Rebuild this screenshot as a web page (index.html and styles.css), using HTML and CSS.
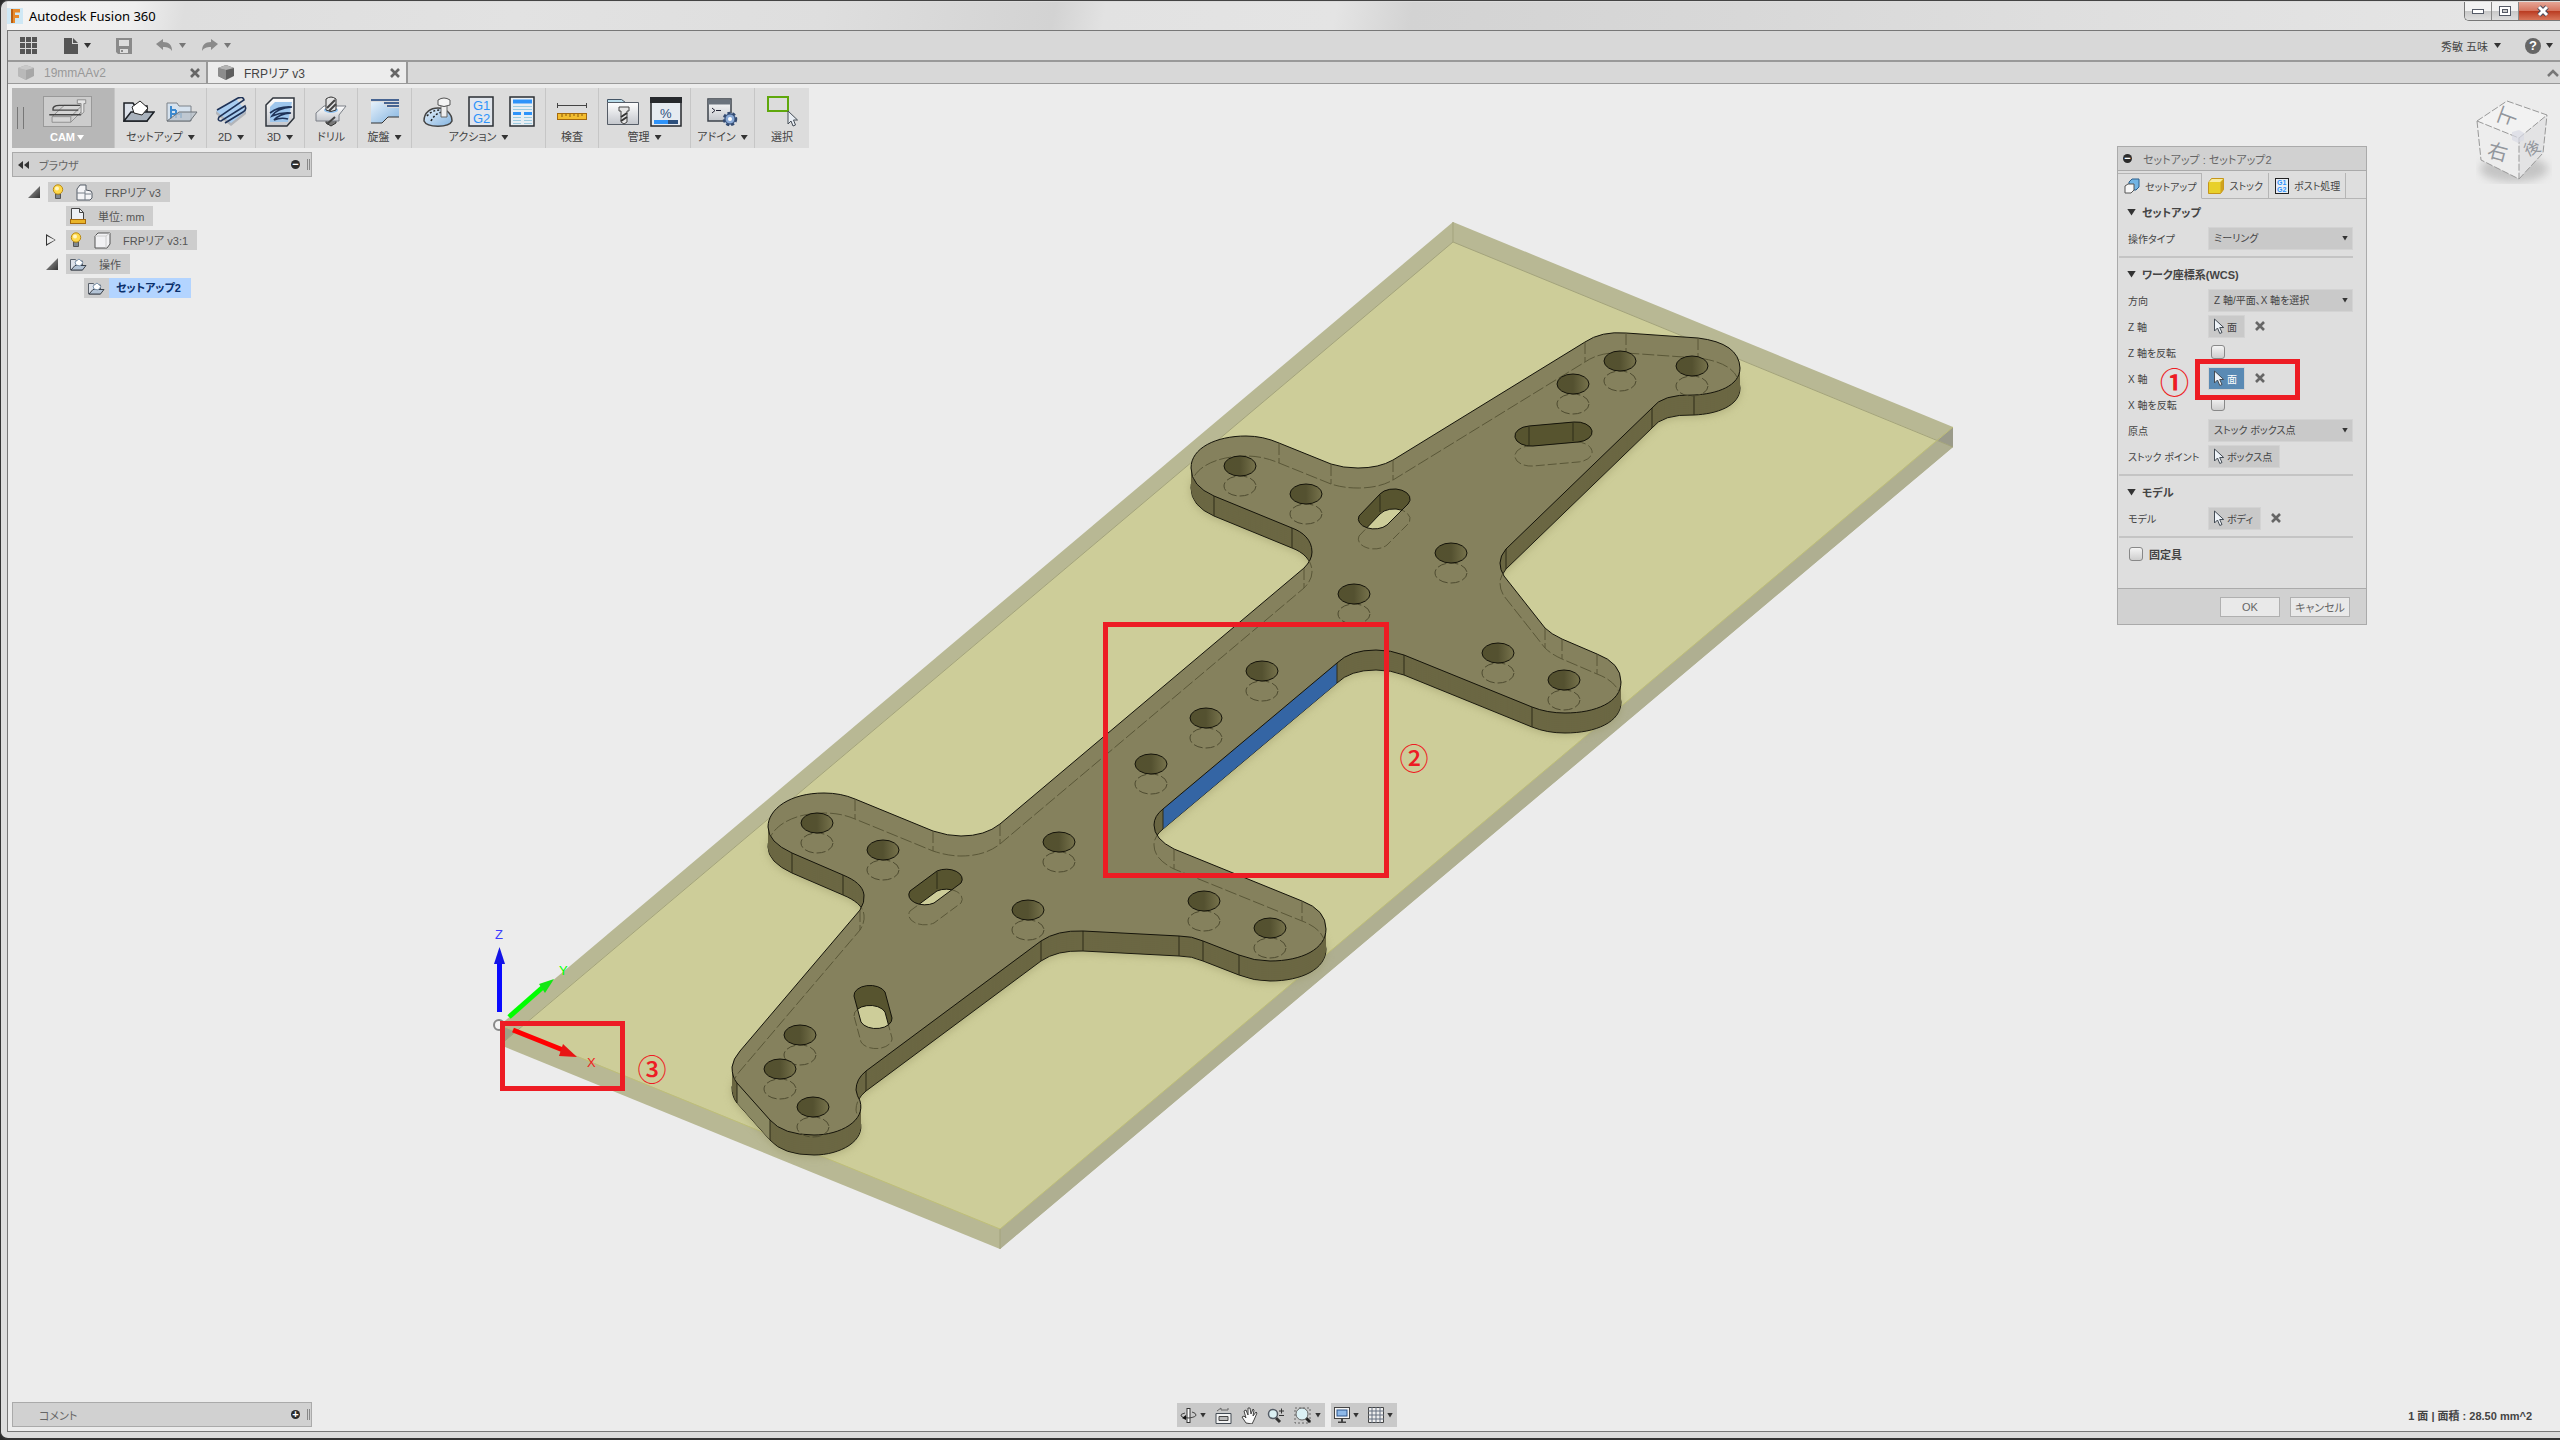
FILE: index.html
```html
<!DOCTYPE html>
<html lang="ja">
<head>
    <meta charset="utf-8">
    <title>Autodesk Fusion 360</title>
    <link rel="stylesheet" href="styles.css">
</head>
<body>
    <!-- shared icons -->
    <svg class="defs" width="0" height="0">
        <defs>
            <linearGradient id="blueFill" x1="0" y1="0" x2="1" y2="1">
                <stop offset="0" stop-color="#e6f1fb"/><stop offset="1" stop-color="#84b4e0"/>
            </linearGradient>
            <linearGradient id="greyFill" x1="0" y1="0" x2="0" y2="1">
                <stop offset="0" stop-color="#fff"/><stop offset="1" stop-color="#c3c6cc"/>
            </linearGradient>
        </defs>
        <symbol id="cursor" viewBox="0 0 12 17">
            <path d="M1.500 1v12l3-3 2.300 5.500 2.200-1-2.300-5h4z" fill="#eef3f8" stroke="#444c55"/>
        </symbol>
        <symbol id="cross" viewBox="0 0 10 10">
            <path d="M1 1l8 8M9 1l-8 8" stroke="#666" stroke-width="2.600"/>
        </symbol>
        <symbol id="bulb" viewBox="0 0 12 16">
            <path d="M3.500 10h5v4.500h-5z" fill="#7e8791" stroke="#555"/>
            <circle cx="6" cy="5.500" r="4.700" fill="#ffd94a" stroke="#b98a14"/>
            <circle cx="5" cy="4.500" r="2" fill="#fff6c4"/>
        </symbol>
        <symbol id="setup" viewBox="0 0 32 23">
            <path d="M1 3h9l2 3h12v15H1z" fill="#dde2ea" stroke="#1b1f25" stroke-width="1.500"/>
            <path d="M1 21L8 12h23l-7 9z" fill="#a9b2bd" stroke="#1b1f25" stroke-width="1.500"/>
            <path d="M9 7l8-6 8 7-6 7-8-2z" fill="#fff" stroke="#222"/>
        </symbol>
        <symbol id="setupSmall" viewBox="0 0 17 13">
            <path d="M.5 1.500h5l1 1.500h6v9H.5z" fill="#dde2ea" stroke="#59606a"/>
            <path d="M1 12l4-4.500h11L12.500 12z" fill="#b4c4d6" stroke="#3c434c"/>
            <path d="M5 4l4-3 4 3.500L10 8 6 7z" fill="#fff" stroke="#7c93ac"/>
        </symbol>
        <symbol id="docCube" viewBox="0 0 16 16">
            <path d="M0 3L8 0l8 3v8l-8 4-8-4z" fill="#5f5f5f"/>
            <path d="M0 3l8 2v10l-8-4z" fill="#8c8c8c"/>
            <path d="M0 3L8 0l8 3-8 2z" fill="#b4b4b4"/>
        </symbol>
    </svg>

    <div class="window">
        <header class="titlebar">
            <svg class="app-icon" viewBox="0 0 16 16">
                <rect width="16" height="16" fill="#cfe8f5"/>
                <path d="M4 1h9v3.500H8V7h4v3H8v5H4z" fill="#e8892b"/>
                <path d="M4 1h2v14H4z" fill="#b85f14"/>
            </svg>
            <span class="app-name">Autodesk Fusion 360</span>
            <div class="window-buttons">
                <button aria-label="最小化"><svg width="14" height="14" viewBox="0 0 14 14"><rect x="1.500" y="5.500" width="11" height="4" fill="#fff" stroke="#555a66"/></svg></button>
                <button aria-label="最大化"><svg width="14" height="14" viewBox="0 0 14 14"><rect x="1.500" y="2.500" width="11" height="9" fill="#fff" stroke="#555a66"/><rect x="4.500" y="5.500" width="5" height="3" fill="#ccc" stroke="#555a66"/></svg></button>
                <button class="close" aria-label="閉じる"><svg width="14" height="14" viewBox="0 0 14 14"><path d="M3 3l8 8M11 3l-8 8" stroke="#4d4d5c" stroke-width="5"/><path d="M3 3l8 8M11 3l-8 8" stroke="#fff" stroke-width="3"/></svg></button>
            </div>
        </header>

        <div class="client">
            <nav class="quickbar">
                <button class="q-grid" aria-label="データ パネル"><svg width="17" height="17" viewBox="0 0 17 17" fill="#555"><path d="M0 0h5v5H0zM6 0h5v5H6zM12 0h5v5h-5zM0 6h5v5H0zM6 6h5v5H6zM12 6h5v5h-5zM0 12h5v5H0zM6 12h5v5H6zM12 12h5v5h-5z"/></svg></button>
                <button class="q-file" aria-label="ファイル"><svg width="14" height="16" viewBox="0 0 14 16" fill="#555"><path d="M0 0h8v6h6v10H0z"/><path d="M9 0l5 5H9z"/></svg><i class="caret"></i></button>
                <button class="q-save" aria-label="保存"><svg width="16" height="16" viewBox="0 0 16 16"><path d="M0 0h16v16H2l-2-2z" fill="#8a8a8a"/><path d="M3 2h10v6H3zM4 11h8v4H4z" fill="#ddd"/><path d="M5 12h2v2H5z" fill="#8a8a8a"/></svg></button>
                <button class="q-undo" aria-label="元に戻す"><svg width="17" height="13" viewBox="0 0 17 13"><path d="M0 5l7-5v3c6 0 9 3 9 9-2-3-4-4-9-4v3z" fill="#8a8a8a"/></svg><i class="caret dim"></i></button>
                <button class="q-redo" aria-label="やり直し"><svg width="17" height="13" viewBox="0 0 17 13"><path d="M17 5l-7-5v3C4 3 1 6 1 12c2-3 4-4 9-4v3z" fill="#8a8a8a"/></svg><i class="caret dim"></i></button>
                <button class="q-user">秀敏 五味 <i class="caret"></i></button>
                <button class="q-help" aria-label="ヘルプ"><span class="help">?</span><i class="caret"></i></button>
            </nav>

            <div class="doc-tabs">
                <div class="doc-tab inactive">
                    <svg width="16" height="16"><use href="#docCube"/></svg>
                    <span>19mmAAv2</span>
                    <button aria-label="閉じる"><svg width="10" height="10"><use href="#cross"/></svg></button>
                </div>
                <div class="doc-tab active">
                    <svg width="16" height="16"><use href="#docCube"/></svg>
                    <span>FRPリア v3</span>
                    <button aria-label="閉じる"><svg width="10" height="10"><use href="#cross"/></svg></button>
                </div>
                <button class="collapse" aria-label="折りたたむ"><svg width="12" height="8" viewBox="0 0 12 8"><path d="M1 7l5-5 5 5" fill="none" stroke="#777" stroke-width="2.500"/></svg></button>
            </div>

            <main class="workspace">
                <svg class="scene" viewBox="8 84 2552 1347" preserveAspectRatio="xMidYMid slice">
                    <defs>
                        <path id="plate" d="M732 1067Q733 1059 740 1051L860 910Q865 902 864 895C863 886 855 880 843 875L792 853Q768 842 768 827C768 809 790 793 824 793Q841 793 855 799L933 831Q948 836 961 836Q985 836 1000 824L1304 568Q1312 560 1312 552C1312 540 1303 532 1292 528L1214 496Q1191 486 1191 468C1191 448 1216 436 1246 436Q1263 436 1279 443L1331 464Q1343 468 1358 468Q1379 468 1393 460L1585 342Q1601 331 1626 333L1698 338Q1739 343 1740 368C1740 386 1717 394 1694 395Q1662 394 1652 408L1506 549Q1500 556 1500 563Q1500 570 1504 576L1545 628Q1551 634 1562 639L1597 654Q1621 663 1621 682C1621 702 1596 713 1565 713Q1547 713 1532 707L1404 655Q1391 650 1376 650Q1350 650 1337 663L1163 809Q1154 816 1154 825Q1154 839 1174 849L1302 901Q1326 910 1326 929C1326 949 1302 961 1270 961Q1254 961 1239 955L1203 941Q1192 936 1179 936L1083 931Q1057 930 1041 941L866 1071Q856 1079 856 1090Q857 1096 860 1101C866 1121 840 1135 814 1135Q783 1135 770 1120L737 1083Q732 1077 732 1067Z"/>
                        <path id="slots" d="M1529 426L1574 422A16 10 0 0 1 1578 442L1533 446A16 10 0 0 1 1529 426ZM1359 516L1380 494A16 10 0 0 1 1408 504L1387 525A16 10 0 0 1 1359 516ZM910 891L937 871A16 10 0 0 1 961 883L934 903A16 10 0 0 1 910 891ZM854 996A16 10 0 0 1 885 992L892 1018A16 10 0 0 1 861 1022Z"/>
                        <clipPath id="plateClip"><use href="#plate"/></clipPath>
                        <clipPath id="slotClip"><use href="#slots"/></clipPath>
                        <linearGradient id="wall" x1="0" x2="1">
                            <stop offset="0" stop-color="#54512f"/><stop offset=".5" stop-color="#545130"/><stop offset="1" stop-color="#77734c"/>
                        </linearGradient>
                        <g id="hole">
                            <ellipse cy="20" rx="16" ry="10" fill="none" stroke="#4e4b30" stroke-dasharray="9 3"/>
                            <ellipse rx="16" ry="10" fill="url(#wall)" stroke="#15140a"/>
                        </g>
                        <filter id="soft" x="-5%" y="-5%" width="110%" height="110%"><feGaussianBlur stdDeviation="4"/></filter>
                    </defs>

                    <!-- stock -->
                    <path d="M500 1025L1453 222L1953 427V447L1000 1249L500 1045Z" fill="#b8b894"/>
                    <path d="M1000 1229L1953 427V447L1000 1249Z" fill="#afaf91"/>
                    <path d="M1937 440L1953 427V447Z" fill="#9b9b8a"/>
                    <path d="M500 1025L516 1031L500 1045Z" fill="#9f9f86"/>
                    <path d="M516 1031L1453 242L1937 440L1000 1229Z" fill="#cdcd99"/>
                    <path d="M500 1045L1453 242L1953 447M1453 222V242M1000 1229V1249" fill="none" stroke="#a3a37c"/>
                    <path d="M500 1025L1000 1229L1953 427" fill="none" stroke="#bfbf78"/>

                    <!-- plate -->
                    <use href="#plate" y="22" fill="#9a9868" opacity=".6" filter="url(#soft)"/>
                    <use href="#plate" y="20" fill="#69653f" stroke="#1c1b10"/>
                    <g fill="#6b6743">
                        <use href="#plate" y="19"/><use href="#plate" y="17"/><use href="#plate" y="15"/><use href="#plate" y="13"/>
                        <use href="#plate" y="11"/><use href="#plate" y="9"/><use href="#plate" y="7"/><use href="#plate" y="5"/><use href="#plate" y="3"/>
                    </g>
                    <path d="M737 1083L770 1120V1140L737 1103Z" fill="#8b8963"/>
                    <path d="M1337 663L1163 809V829L1337 683Z" fill="#3465a4"/>
                    <path d="M792 853v20M843 875v20M1214 496v20M1292 528v20M1652 408v20M1694 395v20M1506 549v20M1532 707v20M1404 655v20M1337 663v20M1163 809v20M1239 955v20M1203 941v20M1179 936v20M1083 931v20M1041 941v20M866 1071v20M770 1120v20M737 1083v20" stroke="#2f2d18"/>
                    <use href="#plate" fill="#85815d" stroke="#15140a"/>
                    <g clip-path="url(#plateClip)" fill="none" stroke="#5a5738" stroke-dasharray="12 3">
                        <use href="#plate" y="20"/>
                        <path d="M855 799v20M933 831v20M1000 824v20M1279 443v20M1331 464v20M1393 460v20M1585 342v20M1626 333v20M1698 338v20M1545 628v20M1562 639v20M1597 654v20M1174 849v20M1302 901v20M1304 568v20M860 910v20"/>
                    </g>
                    <use href="#slots" y="20" fill="none" stroke="#5a5738" stroke-dasharray="9 3"/>
                    <use href="#slots" fill="#57542f"/>
                    <g clip-path="url(#slotClip)"><use href="#slots" y="20" fill="#cdcd99" stroke="#15140a"/></g>
                    <path d="M1529 426L1574 422A16 10 0 0 1 1578 442L1533 446A16 10 0 0 1 1529 426Z" fill="#57542f"/>
                    <path d="M1529 427v18M1573 423v18M1380 495v17M937 872v17" stroke="#2f2d18"/>
                    <use href="#slots" fill="none" stroke="#15140a"/>
                    <use href="#hole" x="817" y="823"/><use href="#hole" x="883" y="850"/>
                    <use href="#hole" x="1059" y="842"/><use href="#hole" x="1028" y="910"/>
                    <use href="#hole" x="1204" y="901"/><use href="#hole" x="1270" y="928"/>
                    <use href="#hole" x="1206" y="718"/><use href="#hole" x="1151" y="764"/>
                    <use href="#hole" x="1262" y="671"/><use href="#hole" x="800" y="1035"/>
                    <use href="#hole" x="780" y="1069"/><use href="#hole" x="813" y="1107"/>
                    <use href="#hole" x="1240" y="466"/><use href="#hole" x="1306" y="494"/>
                    <use href="#hole" x="1620" y="361"/><use href="#hole" x="1692" y="366"/>
                    <use href="#hole" x="1573" y="384"/><use href="#hole" x="1451" y="553"/>
                    <use href="#hole" x="1354" y="594"/><use href="#hole" x="1498" y="653"/>
                    <use href="#hole" x="1564" y="680"/>

                    <!-- origin triad -->
                    <circle cx="499" cy="1025" r="5" fill="#f4f4f4" stroke="#888" stroke-width="2"/>
                    <path d="M499.500 1012V962" stroke="#0a0aff" stroke-width="5"/>
                    <path d="M494 964l5.500-17 5.500 17z" fill="#1414e6"/>
                    <path d="M509 1017l34-30" stroke="#0f0" stroke-width="5"/>
                    <path d="M539 984l15-5-9 14z" fill="#14e614"/>
                    <path d="M513 1030l50 20" stroke="#f00" stroke-width="5"/>
                    <path d="M563 1044l14 13-18-1z" fill="#e81414"/>
                    <text x="495" y="939" class="axis" fill="#3c3cff">Z</text>
                    <text x="559" y="975" class="axis" fill="#0f0">Y</text>
                    <text x="587" y="1067" class="axis" fill="#f02020">X</text>

                    <!-- notes -->
                    <g fill="none" stroke="#ed1c24" stroke-width="5">
                        <rect x="1105.500" y="624.500" width="281" height="251"/>
                        <rect x="502.500" y="1023.500" width="120" height="65"/>
                    </g>
                    <text x="1414" y="770" class="note">②</text>
                    <text x="652" y="1081" class="note">③</text>
                </svg>

                <div class="toolbar">
                    <button class="tool cam">
                        <span class="icons"><svg class="boxed" width="49" height="31" viewBox="0 0 49 31"><path d="M8 21l13-12h19l-12 12zM8 21v6h20v-6M28 27l12-12V9" fill="#d5d5d5" stroke="#8d8d8d"/><path d="M5 19h34M38 9H16q-8 0-7 5h27" fill="none" stroke="#444" stroke-width="1.500"/><path d="M35 3h9v4h-2v9l-3 3V7h-4z" fill="#e4e4e4" stroke="#888"/></svg></span>
                        <span class="tool-label">CAM<i class="caret"></i></span>
                    </button>
                    <button class="tool w-setup">
                        <span class="icons">
                            <svg width="32" height="23"><use href="#setup"/></svg>
                            <svg width="32" height="22" viewBox="0 0 32 22"><path d="M1 2h10l2 3h12v15H1z" fill="#d6e2ee" stroke="#7c8289"/><path d="M5 5v13M5 9h5M5 13h10M10 9v8M15 12v5" stroke="#3c8ad0" stroke-width="2"/><path d="M1 20l12-9h18l-7 9z" fill="#b9c2cb" fill-opacity=".8" stroke="#6c7278"/></svg>
                        </span>
                        <span class="tool-label">セットアップ <i class="caret"></i></span>
                    </button>
                    <button class="tool w-2d">
                        <span class="icons"><svg width="32" height="30" viewBox="0 0 32 30"><path d="M1 14L21 2l10 12-15 13z" fill="#a9cdf0"/><path d="M1 14l15 12 15-12v3L16 29 1 17z" fill="#b2b5ba"/><path d="M2 13L23 1q5-2 6 2L4 20q-2 4 2 4L30 9q2 4-2 6L10 26" fill="none" stroke="#1f3358" stroke-width="1.600"/></svg></span>
                        <span class="tool-label">2D <i class="caret"></i></span>
                    </button>
                    <button class="tool w-2d">
                        <span class="icons"><svg width="30" height="30" viewBox="0 0 30 30"><path d="M1 8l7-7h21v20l-7 8H1z" fill="url(#greyFill)" stroke="#2f353c" stroke-width="1.500"/><path d="M5 10l5-5h17l-4 20H5z" fill="#9ec6ec"/><path d="M5 16q9-7 22-6-15 1-20 9 10-4 19-3-12 1-17 7 7-3 14-1" fill="none" stroke="#1f3358" stroke-width="1.600"/></svg></span>
                        <span class="tool-label">3D <i class="caret"></i></span>
                    </button>
                    <button class="tool w-drill">
                        <span class="icons"><svg width="32" height="31" viewBox="0 0 32 31"><path d="M11 18h10v9l-5 3-5-3z" fill="#777" stroke="#333"/><path d="M1 17l8-7h22l-7 9v6H1z" fill="url(#greyFill)" stroke="#7a7f86"/><ellipse cx="16" cy="14" rx="7" ry="3" fill="#8fc0ee"/><path d="M11 3q5-4 10 0v11q-5 3-10 0z" fill="#e3e3e3" stroke="#333"/><path d="M12 12l8-8M14 15l7-7M12 28l8-7" stroke="#444" stroke-width="2"/></svg></span>
                        <span class="tool-label">ドリル</span>
                    </button>
                    <button class="tool w-turn">
                        <span class="icons"><svg width="28" height="25" viewBox="0 0 28 25"><path d="M0 1h28M13 4h15M16 7h12" stroke="#173e7a" stroke-width="1.500"/><path d="M0 3h11l6 6h11v9H17l-6 6H0z" fill="url(#blueFill)"/><path d="M28 18H17l-6 6H0" fill="none" stroke="#333"/></svg></span>
                        <span class="tool-label">旋盤 <i class="caret"></i></span>
                    </button>
                    <button class="tool w-action">
                        <span class="icons">
                            <svg width="30" height="30" viewBox="0 0 30 30"><path d="M1 24C1 15 8 11 15 11s14 5 14 13c-3 7-25 7-28 0z" fill="url(#blueFill)" stroke="#444" stroke-width="1.500"/><path d="M4 19q5-6 13-6M8 24q4-8 12-9" fill="none" stroke="#222" stroke-width="1.500" stroke-dasharray="2 2"/><path d="M18 9h6v11h-6z" fill="#eee" stroke="#666"/><path d="M15 3q6-4 12 0v5q-6 3-12 0z" fill="#f4f4f4" stroke="#555"/></svg>
                            <svg width="26" height="31" viewBox="0 0 26 31"><rect x="1" y="1" width="24" height="29" fill="#e1e6ed" stroke="#2a2e33" stroke-width="1.500"/><text x="5" y="14" class="gcode">G1</text><text x="5" y="27" class="gcode">G2</text></svg>
                            <svg width="26" height="31" viewBox="0 0 26 31"><rect x="1" y="1" width="24" height="29" fill="#e8eef3" stroke="#2a2e33" stroke-width="1.500"/><path d="M4 5.500h19" stroke="#2e93fa" stroke-width="4"/><path d="M4 17.500h8M15 17.500h8" stroke="#2e93fa" stroke-width="3"/><path d="M4 10.500h19M4 13.500h19M4 21.500h8M4 24.500h8M4 27.500h8M15 21.500h8M15 24.500h8M15 27.500h8" stroke="#9ccbe0"/></svg>
                        </span>
                        <span class="tool-label">アクション <i class="caret"></i></span>
                    </button>
                    <button class="tool w-inspect">
                        <span class="icons"><svg width="30" height="20" viewBox="0 0 30 20"><path d="M.5 1v5M29.500 1v5M0 3.500h30" stroke="#444"/><rect x=".5" y="11.500" width="29" height="6" fill="#f3bd2e" stroke="#a5690c"/><path d="M5 12v3M9 12v2M13 12v3M17 12v2M21 12v3M25 12v2" stroke="#8a5a0c"/></svg></span>
                        <span class="tool-label">検査</span>
                    </button>
                    <button class="tool w-manage">
                        <span class="icons">
                            <svg width="32" height="28" viewBox="0 0 32 28"><path d="M.5 1.500h14l4 3h-18z" fill="#b9dcea" stroke="#456"/><path d="M.5 4.500h31v22H.5z" fill="url(#greyFill)" stroke="#555c66"/><path d="M12 9h10v4h-2v11l-3 2-3-2V13h-2z" fill="#e6e6e6" stroke="#444"/><path d="M14 19l6-4M14 23l6-4" stroke="#333" stroke-width="2"/></svg>
                            <svg width="32" height="30" viewBox="0 0 32 30"><rect x="1" y="1" width="30" height="28" fill="#e6ebf1" stroke="#26292d" stroke-width="1.500"/><path d="M0 0h32v6H0z" fill="#26292d"/><path d="M4 25h14" stroke="#2e93fa" stroke-width="4"/><path d="M18 25h10" stroke="#2c4f7c" stroke-width="4"/><text x="10" y="21" class="percent">%</text></svg>
                        </span>
                        <span class="tool-label">管理 <i class="caret"></i></span>
                    </button>
                    <button class="tool w-addin">
                        <span class="icons"><svg width="31" height="30" viewBox="0 0 31 30"><rect x="1" y="2" width="23" height="22" fill="url(#greyFill)" stroke="#3c434b" stroke-width="1.500"/><path d="M1 5h23" stroke="#6b737d" stroke-width="5"/><path d="M5 11l3 2.500L5 16M9 13.500h5" fill="none" stroke="#223"/><circle cx="23" cy="22" r="6" fill="#89a9d6" stroke="#334a70" stroke-width="2.500" stroke-dasharray="3 2"/><circle cx="23" cy="22" r="5" fill="#89a9d6" stroke="#334a70"/><circle cx="23" cy="22" r="2" fill="#fff"/></svg></span>
                        <span class="tool-label">アドイン <i class="caret"></i></span>
                    </button>
                    <button class="tool w-select">
                        <span class="icons"><svg width="31" height="31" viewBox="0 0 31 31"><rect x="1" y="1" width="20" height="14" fill="none" stroke="#5fa80c" stroke-width="2"/><path d="M21 15v13l3-3 2 5 2.500-1-2-5h4z" fill="#e8edf3" stroke="#444c55"/></svg></span>
                        <span class="tool-label">選択</span>
                    </button>
                </div>

                <aside class="browser">
                    <div class="bar">
                        <svg width="11" height="8" viewBox="0 0 11 8"><path d="M5 0v8L0 4zM11 0v8L6 4z" fill="#333"/></svg>
                        <span>ブラウザ</span>
                        <i class="knob">−</i><i class="grip"></i>
                    </div>
                    <ul class="tree">
                        <li class="lv1"><i class="twisty open"></i><span class="node"><svg width="12" height="16"><use href="#bulb"/></svg><svg width="17" height="17" viewBox="0 0 17 17"><path d="M1 5l3-4h6v5l5 1 1 2v5l-2 2H1z" fill="#f4f4f6" stroke="#555c66"/><path d="M1 9h8M9 6v10M9 10h6" stroke="#777e88" fill="none"/></svg>FRPリア v3</span></li>
                        <li class="lv2"><i class="twisty"></i><span class="node"><svg width="16" height="16" viewBox="0 0 16 16"><path d="M1.500.5h8l4 4V12h-12z" fill="#eef0f4" stroke="#444"/><path d="M9.500.5v4h4" fill="none" stroke="#444"/><rect x=".5" y="11.500" width="15" height="4" fill="#e9b429" stroke="#a5690c"/></svg>単位: mm</span></li>
                        <li class="lv2"><i class="twisty closed"></i><span class="node"><svg width="12" height="16"><use href="#bulb"/></svg><svg width="17" height="17" viewBox="0 0 17 17"><path d="M1 4l3-3h12v11l-3 4H1z" fill="#f1f1f3" stroke="#555"/><path d="M1 4h11v12M12 4l4-3" fill="none" stroke="#ccc"/></svg>FRPリア v3:1</span></li>
                        <li class="lv2"><i class="twisty open"></i><span class="node"><svg width="17" height="13"><use href="#setupSmall"/></svg>操作</span></li>
                        <li class="lv3"><span class="node slim"><svg width="17" height="13"><use href="#setupSmall"/></svg></span><span class="picked">セットアップ2</span></li>
                    </ul>
                </aside>

                <div class="comments bar">
                    <span>コメント</span>
                    <i class="knob">+</i><i class="grip"></i>
                </div>

                <svg class="viewcube" width="84" height="96" viewBox="0 0 84 96">
                    <ellipse cx="44" cy="75" rx="34" ry="13" fill="#aaa" opacity=".6" filter="url(#soft)"/>
                    <path d="M7 27L37 7l40 14-28 23z" fill="#f2f2f2"/>
                    <path d="M7 27l42 17v41L11 66z" fill="#ededed"/>
                    <path d="M49 44l28-23-4 38-24 26z" fill="#e3e3e4"/>
                    <path d="M7 27L37 7l40 14-28 23zM7 27l4 39 38 19V44M49 85l24-26 4-38" fill="none" stroke="#999" stroke-dasharray="7 2"/>
                    <path d="M42 38l7-2 5 3v7l-6 3-6-3z" fill="#d8dae4" opacity=".7"/>
                    <text x="-10" y="8" transform="translate(38 23) rotate(110)">上</text>
                    <text x="-10" y="8" transform="translate(28 57) rotate(15)">右</text>
                    <text x="-8" y="6" class="small" transform="translate(62 54) rotate(-25)">後</text>
                </svg>

                <form class="panel">
                    <div class="panel-head"><i class="knob">−</i>セットアップ : セットアップ2</div>
                    <div class="panel-tabs">
                        <button type="button" class="on"><svg width="16" height="16" viewBox="0 0 16 16"><path d="M5 4l3-3h7v8l-3 3H5z" fill="#72b4e4" stroke="#2b5f8c"/><path d="M1 8l3-2h6v6l-3 3H1z" fill="#f7f7f7" stroke="#555"/></svg>セットアップ</button>
                        <button type="button"><svg width="16" height="16" viewBox="0 0 16 16"><path d="M.5 4.500l3-4h12v11l-3 4H.5z" fill="#e8d02a" stroke="#c5951b"/><path d="M1 4l3-3h11l-3 3z" fill="#f8eca0"/><path d="M12.500 4.500v11l3-4V1z" fill="#cfa21f"/></svg>ストック</button>
                        <button type="button"><svg width="14" height="16" viewBox="0 0 14 16"><rect x=".5" y=".5" width="13" height="15" fill="#e8eef5" stroke="#222"/><text x="2" y="7" class="gcode tiny">G1</text><text x="2" y="14" class="gcode tiny">G2</text></svg>ポスト処理</button>
                    </div>
                    <div class="panel-body">
                        <h3><i class="caret"></i>セットアップ</h3>
                        <div class="field"><label for="op">操作タイプ</label><span class="drop"><select id="op"><option>ミーリング</option></select><i class="caret"></i></span></div>
                        <hr>
                        <h3><i class="caret"></i>ワーク座標系(WCS)</h3>
                        <div class="field"><label for="dir">方向</label><span class="drop"><select id="dir"><option>Z 軸/平面、X 軸を選択</option></select><i class="caret"></i></span></div>
                        <div class="field"><label for="zaxis">Z 軸</label><button type="button" id="zaxis" class="pick"><svg width="12" height="17"><use href="#cursor"/></svg>面</button><button type="button" class="clear" aria-label="クリア"><svg width="10" height="10"><use href="#cross"/></svg></button></div>
                        <div class="field"><label for="zflip">Z 軸を反転</label><input type="checkbox" id="zflip"></div>
                        <div class="field"><label for="xaxis">X 軸</label><button type="button" id="xaxis" class="pick active"><svg width="12" height="17"><use href="#cursor"/></svg>面</button><button type="button" class="clear" aria-label="クリア"><svg width="10" height="10"><use href="#cross"/></svg></button><span class="callout"><b>①</b></span></div>
                        <div class="field"><label for="xflip">X 軸を反転</label><input type="checkbox" id="xflip"></div>
                        <div class="field"><label for="origin">原点</label><span class="drop"><select id="origin"><option>ストック ボックス点</option></select><i class="caret"></i></span></div>
                        <div class="field"><label for="stockpt">ストック ポイント</label><button type="button" id="stockpt" class="pick"><svg width="12" height="17"><use href="#cursor"/></svg>ボックス点</button></div>
                        <hr>
                        <h3><i class="caret"></i>モデル</h3>
                        <div class="field"><label for="model">モデル</label><button type="button" id="model" class="pick"><svg width="12" height="17"><use href="#cursor"/></svg>ボディ</button><button type="button" class="clear" aria-label="クリア"><svg width="10" height="10"><use href="#cross"/></svg></button></div>
                        <hr>
                        <div class="fixture"><input type="checkbox" id="fixture"><label for="fixture">固定具</label></div>
                    </div>
                    <div class="panel-foot"><button type="button">OK</button><button type="button">キャンセル</button></div>
                </form>

                <div class="navbar">
                    <div class="nav-group">
                        <button aria-label="オービット"><svg width="17" height="17" viewBox="0 0 17 17"><path d="M8.500 1v15" stroke="#333" stroke-width="4"/><path d="M8.500 2v13" stroke="#fff" stroke-width="2"/><path d="M5 6Q0 7 1 9t8 2q7-1 7-3t-4-3" fill="none" stroke="#444"/><path d="M6 8v5l-4-2z" fill="#111"/></svg><i class="caret"></i></button>
                        <button aria-label="ビュー面"><svg width="17" height="17" viewBox="0 0 17 17"><path d="M1 6.500h15v10H1z" fill="#f3f3f3" stroke="#444c55"/><path d="M4 9.500h9v4H4z" fill="#bbb" stroke="#444"/><path d="M2 4l4-3v2h7V1" fill="none" stroke="#666"/></svg></button>
                        <button aria-label="画面移動"><svg width="17" height="17" viewBox="0 0 17 17"><path d="M5 16l-4-6 2-1 2 2-2-7 2-1 2 5V1h2l1 6 2-5 1 1-1 6 3-4 1 1-3 7-2 4z" fill="#fafafa" stroke="#444"/></svg></button>
                        <button aria-label="ズーム"><svg width="18" height="17" viewBox="0 0 18 17"><path d="M9 11l4 4" stroke="#333" stroke-width="3"/><circle cx="6" cy="7" r="4.500" fill="#dbf0f4" stroke="#555c66" stroke-width="1.500"/><path d="M12 4h5M14.500 1.500v5M12 8.500h5" stroke="#333"/></svg></button>
                        <button aria-label="フィット"><svg width="18" height="17" viewBox="0 0 18 17"><path d="M1 1h15v15H1z" fill="none" stroke="#666" stroke-dasharray="2 2"/><path d="M12 11l4 4" stroke="#222" stroke-width="3"/><circle cx="8" cy="7" r="6" fill="#dbf0f4" stroke="#666"/></svg><i class="caret"></i></button>
                    </div>
                    <div class="nav-group">
                        <button aria-label="表示設定"><svg width="16" height="16" viewBox="0 0 16 16"><path d="M4 15.500h8M8 12v3" stroke="#444" stroke-width="2"/><rect x=".5" y=".5" width="15" height="11" fill="#f4f4f4" stroke="#444"/><rect x="3" y="3" width="10" height="6" fill="#8db8e8" stroke="#2e568c"/></svg><i class="caret"></i></button>
                        <button aria-label="グリッド"><svg width="16" height="16" viewBox="0 0 16 16"><path d="M.5.5h15v15H.5z" fill="#eee" stroke="#444"/><path d="M4 0v16M8 0v16M12 0v16M0 4h16M0 8h16M0 12h16" stroke="#667080"/></svg><i class="caret"></i></button>
                    </div>
                </div>

                <div class="status">1 面 | 面積 : 28.50 mm^2</div>
            </main>
        </div>
    </div>
</body>
</html>
```

FILE: styles.css
```css
* {
    box-sizing: border-box;
}

body {
    margin: 0;
    height: 100vh;
    background: #2b2b2b;
    font-family: "Liberation Sans", "Noto Sans CJK JP", sans-serif;
    font-size: 12px;
    font-feature-settings: "palt";
    color: #444;
    overflow: hidden;
}

button {
    display: flex;
    align-items: center;
    margin: 0;
    padding: 0;
    border: 0;
    background: none;
    font: inherit;
    color: inherit;
}

svg {
    display: block;
    flex: none;
}

.defs {
    position: absolute;
}

.window {
    display: flex;
    flex-direction: column;
    height: 100vh;
    padding: 1px 0 6px 6px;
    border-left: 1px solid #333;
    border-top: 1px solid #444;
    border-bottom: 2px solid #333;
    border-radius: 8px 0 0 8px;
    background: #dcdcdc;
}

.titlebar {
    display: flex;
    align-items: center;
    flex: none;
    height: 28px;
    background: linear-gradient(100deg, #f4f4f4 0%, #efefef 5%, #dedede 7%, #e2e2e2 20%, #dedede 32%, #d3d3d3 41%, #e2e2e2 43%, #e4e4e4 52%, #d3d3d3 55%, #d8d8d8 68%, #dedede 80%, #e6e6e6 100%);
}

.app-icon {
    width: 16px;
    height: 16px;
    margin-right: 6px;
}

.app-name {
    font-family: "Noto Sans", sans-serif;
    font-size: 13px;
    color: #000;
}

.window-buttons {
    display: flex;
    align-self: flex-start;
    height: 19px;
    margin-left: auto;
    border: 1px solid #777;
    border-width: 0 0 1px 1px;
    border-radius: 0 0 0 5px;
    overflow: hidden;
}

.window-buttons button {
    justify-content: center;
    width: 27px;
    border-right: 1px solid #888;
    background: linear-gradient(#f2f2f2 50%, #c8c8c8 50%, #dedede);
}

.window-buttons .close {
    width: 41px;
    padding-left: 6px;
    border: 0;
    background: linear-gradient(#e6a595 0%, #d5745e 50%, #b93a20 50%, #d8765a);
}

.client {
    display: flex;
    flex-direction: column;
    flex: 1;
    border: 1px solid #777;
    border-right: 0;
    background: #ececec;
}

.quickbar {
    display: flex;
    align-items: center;
    flex: none;
    height: 29px;
    padding: 0 7px 0 12px;
    background: #d8d8d8;
}

.caret {
    display: inline-block;
    width: 7px;
    height: 5px;
    background: #333;
    clip-path: polygon(0 0, 100% 0, 50% 100%);
}

.caret.dim {
    background: #777;
}

.quickbar .caret {
    margin-left: 6px;
}

.q-file {
    margin-left: 27px;
}

.q-save {
    margin-left: 25px;
}

.q-undo {
    margin-left: 24px;
}

.q-redo {
    margin-left: 15px;
}

.q-user {
    margin-left: auto;
    font-size: 11px;
}

.q-help {
    margin-left: 24px;
}

.quickbar .q-help .caret {
    margin-left: 5px;
}

.help {
    width: 16px;
    height: 16px;
    border-radius: 50%;
    background: #666;
    color: #fff;
    font-size: 13px;
    font-weight: bold;
    line-height: 16px;
    text-align: center;
}

.doc-tabs {
    display: flex;
    flex: none;
    height: 24px;
    border-top: 2px solid #999;
    border-bottom: 1px solid #999;
    background: #d8d8d8;
}

.doc-tab {
    display: flex;
    align-items: center;
    width: 200px;
    padding: 0 6px 0 10px;
    border-right: 2px solid #999;
}

.doc-tab span {
    flex: 1;
    margin-left: 10px;
}

.doc-tab.inactive {
    color: #999;
}

.doc-tab.inactive > svg {
    opacity: .4;
}

.doc-tab.active {
    background: #ececec;
}

.collapse {
    margin: 0 1px 0 auto;
}

.workspace {
    position: relative;
    flex: 1;
    overflow: hidden;
}

.scene {
    position: absolute;
    width: 100%;
    height: 100%;
}

.axis {
    font-size: 13px;
}

.note {
    font-family: "Noto Sans CJK JP", sans-serif;
    font-size: 29px;
    font-weight: 500;
    fill: #ed1c24;
    text-anchor: middle;
}

.toolbar {
    position: absolute;
    top: 4px;
    left: 4px;
    display: flex;
    height: 60px;
    background: #dcdcdc;
}

.tool {
    position: relative;
    flex-direction: column;
    border-right: 1px solid #c6c6c6;
}

.tool:last-child {
    border: 0;
}

.icons {
    display: flex;
    align-items: center;
    justify-content: center;
    gap: 15px;
    height: 40px;
    padding-top: 7px;
}

.tool-label {
    font-size: 11px;
    line-height: 16px;
    padding-top: 1px;
    white-space: nowrap;
}

.tool-label .caret {
    margin-left: 2px;
    vertical-align: 1px;
}

.cam {
    width: 103px;
    padding-left: 8px;
    background: #b7b7b7;
    color: #fff;
    font-weight: bold;
}

.cam::before {
    content: "";
    position: absolute;
    left: 5px;
    top: 19px;
    width: 5px;
    height: 22px;
    border: 1px solid #777;
    border-width: 0 1px;
}

.cam .caret {
    background: #fff;
}

.boxed {
    background: #ccc;
    border: 1px solid #999;
}

.w-setup {
    width: 92px;
}

.w-setup .icons {
    gap: 11px;
}

.w-2d {
    width: 49px;
}

.w-drill {
    width: 53px;
}

.w-turn {
    width: 54px;
}

.w-action {
    width: 134px;
}

.w-inspect {
    width: 53px;
}

.w-manage {
    width: 92px;
}

.w-manage .icons {
    gap: 11px;
}

.w-addin {
    width: 64px;
}

.w-select {
    width: 54px;
}

.gcode {
    font-size: 13px;
    fill: #2e93fa;
}

.gcode.tiny {
    font-size: 7px;
    font-weight: bold;
}

.percent {
    font-size: 13px;
    fill: #2c4f7c;
}

.bar {
    display: flex;
    align-items: center;
    width: 300px;
    height: 25px;
    padding-left: 5px;
    border: 1px solid #aaa;
    background: #d1d1d1;
    font-size: 11px;
    color: #666;
}

.bar span {
    flex: 1;
    margin-left: 10px;
}

.knob {
    display: inline-block;
    width: 9px;
    height: 9px;
    border-radius: 50%;
    background: #2b2b2b;
    color: #fff;
    font-size: 11px;
    font-style: normal;
    font-weight: bold;
    line-height: 9px;
    text-align: center;
}

.grip {
    width: 3px;
    height: 11px;
    margin: 0 1px 0 7px;
    border: 1px solid #888;
    border-width: 0 1px;
}

.browser {
    position: absolute;
    top: 68px;
    left: 4px;
}

.tree {
    display: flex;
    flex-direction: column;
    gap: 4px;
    margin: 5px 0 0;
    padding: 0;
    list-style: none;
    font-size: 11px;
}

.tree li {
    display: flex;
    align-items: center;
    height: 20px;
}

.lv1 {
    padding-left: 16px;
}

.lv2 {
    padding-left: 34px;
}

.lv3 {
    padding-left: 72px;
}

.twisty {
    width: 12px;
    height: 12px;
    margin-right: 8px;
}

.twisty.open {
    background: linear-gradient(135deg, #aaa, #333);
    clip-path: polygon(100% 0, 100% 100%, 0 100%);
}

.twisty.closed {
    position: relative;
    background: #333;
    clip-path: polygon(0 0, 80% 50%, 0 100%);
}

.twisty.closed::after {
    content: "";
    position: absolute;
    inset: 2px 3px 2px 1px;
    background: #ececec;
    clip-path: polygon(0 0, 100% 50%, 0 100%);
}

.node {
    display: flex;
    align-items: center;
    gap: 12px;
    height: 20px;
    padding: 0 9px 0 4px;
    background: #cdcdcd;
    color: #555;
}

.node.slim {
    width: 25px;
    padding-right: 0;
}

.picked {
    height: 20px;
    padding: 0 10px 0 7px;
    background: #b3d4ff;
    color: #0a2f6b;
    font-weight: bold;
    line-height: 20px;
}

.comments {
    position: absolute;
    left: 4px;
    bottom: 4px;
    padding-left: 16px;
}

.viewcube {
    position: absolute;
    top: 10px;
    right: 6px;
}

.viewcube text {
    font-size: 20px;
    fill: #92969c;
}

.viewcube .small {
    font-size: 16px;
}

.panel {
    position: absolute;
    top: 62px;
    right: 193px;
    width: 250px;
    border: 1px solid #aaa;
    background: #dedede;
    font-size: 11px;
}

.panel-head {
    display: flex;
    align-items: center;
    gap: 11px;
    height: 24px;
    padding-left: 5px;
    border-bottom: 1px solid #aaa;
    background: #d1d1d1;
    color: #666;
}

.panel-tabs {
    display: flex;
    height: 28px;
    padding-top: 2px;
}

.panel-tabs::after {
    content: "";
    flex: 1;
    border-bottom: 1px solid #b5b5b5;
}

.panel-tabs button {
    gap: 5px;
    padding: 0 5px 0 6px;
    border-right: 1px solid #b5b5b5;
    border-bottom: 1px solid #b5b5b5;
    font-size: 10px;
    white-space: nowrap;
}

.panel-tabs .on {
    border-top: 1px solid #b5b5b5;
    border-bottom-color: #dedede;
}

.panel-body {
    height: 389px;
    padding: 0 13px 0 1px;
}

.panel h3 {
    display: flex;
    align-items: center;
    gap: 6px;
    height: 26px;
    margin: 0;
    padding-left: 8px;
    font-size: 11px;
}

.panel h3 .caret {
    width: 9px;
    height: 7px;
}

.panel hr {
    height: 2px;
    margin: 5px 0 3px;
    border: 0;
    background: #c4c4c4;
}

.field {
    position: relative;
    display: flex;
    align-items: center;
    height: 26px;
    padding-left: 9px;
}

.field label {
    width: 80px;
    font-size: 10px;
    white-space: nowrap;
}

.drop {
    position: relative;
    flex: 1;
}

.drop select {
    display: block;
    width: 100%;
    height: 23px;
    padding: 0 5px;
    border: 1px solid #d3d3d3;
    border-radius: 0;
    background: #c9c9c9;
    appearance: none;
    font: inherit;
    font-size: 10px;
    color: inherit;
}

.drop .caret {
    position: absolute;
    right: 5px;
    top: 9px;
    width: 6px;
}

.pick {
    gap: 2px;
    height: 23px;
    padding: 0 7px 0 4px;
    border: 1px solid #d3d3d3;
    background: #c9c9c9;
    font-size: 10px;
}

.pick.active {
    background: #5a8ab4;
    color: #fff;
}

.clear {
    margin-left: 10px;
}

.panel input {
    width: 14px;
    height: 14px;
    margin: 0 0 0 3px;
    border: 1px solid #888;
    border-radius: 3px;
    background: linear-gradient(#f4f4f4, #cecece);
    appearance: none;
}

.fixture {
    display: flex;
    align-items: center;
    gap: 6px;
    height: 26px;
    padding-left: 7px;
    font-weight: bold;
}

.callout {
    position: absolute;
    left: 76px;
    top: -6px;
    z-index: 1;
    width: 105px;
    height: 41px;
    border: 5px solid #ed1c24;
}

.callout b {
    position: absolute;
    left: -40px;
    top: -3px;
    color: #ed1c24;
    font-family: "Noto Sans CJK JP", sans-serif;
    font-size: 29px;
    font-weight: bold;
    line-height: 41px;
}

.panel-foot {
    display: flex;
    align-items: center;
    justify-content: flex-end;
    gap: 10px;
    height: 36px;
    padding-right: 16px;
    border-top: 1px solid #aaa;
    background: #d1d1d1;
}

.panel-foot button {
    justify-content: center;
    width: 60px;
    height: 20px;
    border: 1px solid #b0b0b0;
    background: #e9e9e9;
    color: #666;
}

.navbar {
    position: absolute;
    left: 0;
    right: 0;
    bottom: 4px;
    display: flex;
    justify-content: center;
    gap: 6px;
    padding-left: 6px;
}

.nav-group {
    display: flex;
    align-items: center;
    gap: 9px;
    height: 24px;
    padding: 0 4px 0 3px;
    background: #c9c9c9;
}

.nav-group .caret {
    width: 6px;
    margin-left: 3px;
}

.status {
    position: absolute;
    right: 28px;
    bottom: 8px;
    font-size: 11px;
    font-weight: bold;
}
```
